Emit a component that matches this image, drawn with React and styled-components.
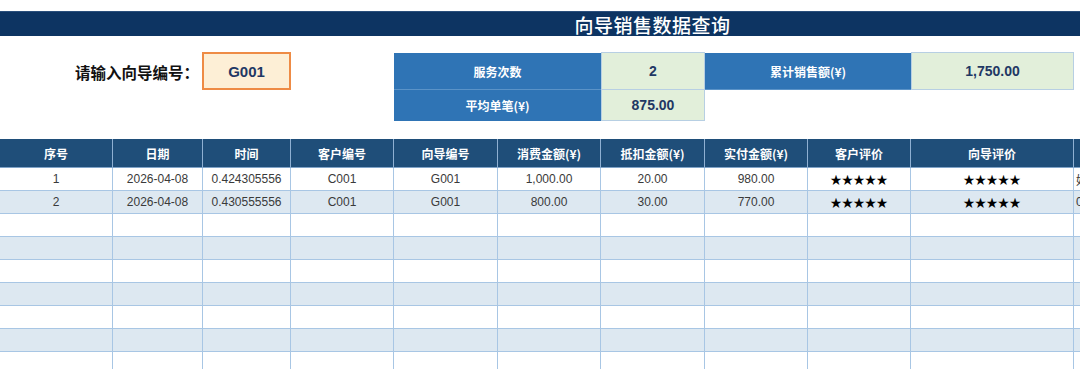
import React from 'react';
import styled, { createGlobalStyle } from 'styled-components';

const COLS = '113px 90px 88px 103px 104px 103px 104px 103px 103px 163px 120px';

const GlobalStyle = createGlobalStyle`
  html, body {
    margin: 0;
    padding: 0;
    background: #ffffff;
  }
  body {
    width: 1080px;
    height: 369px;
    overflow: hidden;
    font-family: "Liberation Sans", Arial, "Noto Sans CJK SC", sans-serif;
  }
`;

const Page = styled.div`
  width: 1080px;
  height: 369px;
  overflow: hidden;
  padding-top: 11px;
  box-sizing: border-box;
`;

const TitleBar = styled.div`
  height: 25px;
  background: #0d3462;
  border-top: 1px solid #2a4f7c;
  box-sizing: border-box;
  display: flex;
  align-items: center;
  justify-content: center;
  padding: 1px 0 0 225px;
`;

const TitleText = styled.h1`
  margin: 0;
  color: #ffffff;
  font-family: "Noto Sans CJK SC", sans-serif;
  font-size: 19px;
  font-weight: 500;
  letter-spacing: 0.5px;
  line-height: 1;
`;

const QueryGrid = styled.div`
  display: grid;
  grid-template-columns: ${COLS};
  grid-template-rows: 37px 31px;
  margin-top: 17px;
`;

const PromptLabel = styled.div`
  grid-column: 1 / 3;
  grid-row: 1;
  justify-self: end;
  align-self: center;
  padding-right: 4px;
  font-family: "Noto Sans CJK SC", sans-serif;
  font-size: 15.5px;
  font-weight: 700;
  color: #111111;
`;

const GuideInput = styled.input`
  grid-column: 3;
  grid-row: 1;
  margin: -1px 0 0 -1px;
  width: calc(100% + 1px);
  height: 38px;
  box-sizing: border-box;
  border: 2px solid #ee8b45;
  background: #fdefd6;
  text-align: center;
  font-family: "Liberation Sans", Arial, sans-serif;
  font-size: 15px;
  font-weight: 700;
  color: #1f3864;
  outline: none;
  padding: 0;
`;

const StatLabel = styled.div`
  grid-column: ${(p) => p.$start} / span 2;
  grid-row: ${(p) => p.$row};
  background: #2f74b5;
  color: #ffffff;
  display: flex;
  align-items: center;
  justify-content: center;
  font-family: "Noto Sans CJK SC", sans-serif;
  font-size: 12px;
  font-weight: 700;
  border-bottom: 1px solid ${(p) => (p.$row === 1 ? '#5a93c8' : '#2f74b5')};
`;

const StatValue = styled.div`
  grid-column: ${(p) => p.$start};
  grid-row: ${(p) => p.$row};
  background: #e2efda;
  border: 1px solid #b7cfe3;
  margin: -1px 0 0 0;
  display: flex;
  align-items: center;
  justify-content: center;
  font-size: 14px;
  font-weight: 700;
  color: #1f3864;
`;

const Table = styled.div`
  margin-top: 18px;
`;

const Row = styled.div`
  display: grid;
  grid-template-columns: ${COLS};
  height: ${(p) => (p.$head ? '29px' : '23px')};
  background: ${(p) => (p.$head ? '#1f4e79' : p.$alt ? '#dde8f1' : '#ffffff')};
`;

const HeadCell = styled.div`
  display: flex;
  align-items: center;
  justify-content: center;
  color: #ffffff;
  font-family: "Noto Sans CJK SC", sans-serif;
  font-size: 12px;
  font-weight: 700;
  border-right: 1px solid #8fb0d2;
  border-bottom: 1px solid #7fa3c8;
  box-sizing: border-box;
`;

const Cell = styled.div`
  display: flex;
  align-items: center;
  justify-content: ${(p) => (p.$left ? 'flex-start' : 'center')};
  padding-left: ${(p) => (p.$left ? '2px' : '0')};
  overflow: hidden;
  white-space: nowrap;
  color: ${(p) => (p.$stars ? '#000000' : '#3a3a3a')};
  font-family: ${(p) => (p.$stars ? '"Noto Sans CJK SC", sans-serif' : '"Liberation Sans", Arial, "Noto Sans CJK SC", sans-serif')};
  font-size: ${(p) => (p.$stars ? '11.5px' : '12px')};
  border-right: 1px solid #a8c6e4;
  border-bottom: 1px solid #a8c6e4;
  box-sizing: border-box;
`;

const headers = ['序号', '日期', '时间', '客户编号', '向导编号', '消费金额(¥)', '抵扣金额(¥)', '实付金额(¥)', '客户评价', '向导评价', ''];

const records = [
  ['1', '2026-04-08', '0.424305556', 'C001', 'G001', '1,000.00', '20.00', '980.00', '★★★★★', '★★★★★', '好评'],
  ['2', '2026-04-08', '0.430555556', 'C001', 'G001', '800.00', '30.00', '770.00', '★★★★★', '★★★★★', '0'],
];

const emptyRows = 8;

export default function App() {
  const rows = [...records];
  for (let i = 0; i < emptyRows; i++) rows.push(Array(11).fill(''));

  return (
    <Page>
      <GlobalStyle />
      <TitleBar>
        <TitleText>向导销售数据查询</TitleText>
      </TitleBar>

      <QueryGrid>
        <PromptLabel>请输入向导编号：</PromptLabel>
        <GuideInput defaultValue="G001" />

        <StatLabel $start={5} $row={1}>服务次数</StatLabel>
        <StatValue $start={7} $row={1}>2</StatValue>
        <StatLabel $start={8} $row={1}>累计销售额(¥)</StatLabel>
        <StatValue $start={10} $row={1}>1,750.00</StatValue>

        <StatLabel $start={5} $row={2}>平均单笔(¥)</StatLabel>
        <StatValue $start={7} $row={2}>875.00</StatValue>
      </QueryGrid>

      <Table>
        <Row $head>
          {headers.map((h, i) => (
            <HeadCell key={i}>{h}</HeadCell>
          ))}
        </Row>
        {rows.map((r, ri) => (
          <Row key={ri} $alt={ri % 2 === 1}>
            {r.map((v, ci) => (
              <Cell key={ci} $stars={ci === 8 || ci === 9} $left={ci === 10}>
                {v}
              </Cell>
            ))}
          </Row>
        ))}
      </Table>
    </Page>
  );
}
